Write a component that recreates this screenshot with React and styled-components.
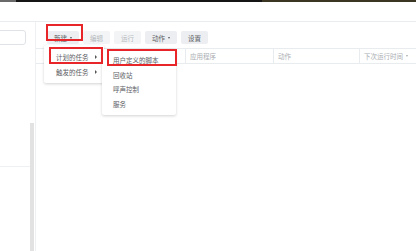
import React from "react";
import styled, { createGlobalStyle } from "styled-components";

const GlobalStyle = createGlobalStyle`
  html, body {
    margin: 0;
    padding: 0;
    background: #fff;
  }
  body {
    font-family: "Noto Sans CJK SC", "Noto Sans", sans-serif;
    font-size: 6.5px;
    color: #555;
    overflow: hidden;
  }
`;

const Page = styled.div`
  width: 416px;
  height: 251px;
  display: flex;
  flex-direction: column;
  overflow: hidden;
`;

const TopStrip = styled.div`
  height: 2px;
  display: flex;
  span:nth-child(1) { width: 16px; background: #6a6a6a; }
  span:nth-child(2) { width: 246px; background: #151515; }
  span:nth-child(3) { flex: 1; background: #3b3624; }
`;

const TitleGap = styled.div`
  height: 19px;
  border-bottom: 1px solid #e9edf0;
`;

const Body = styled.div`
  flex: 1;
  display: flex;
  min-height: 0;
`;

const Side = styled.div`
  width: 35px;
  border-right: 1px solid #eef1f3;
  display: flex;
  flex-direction: column;
`;

const Search = styled.div`
  margin: 8px 9px 0 -4px;
  height: 13px;
  border: 1px solid #dfe3e7;
  border-radius: 3px;
`;

const SideList = styled.div`
  flex: 1;
  display: flex;
  margin-top: 78px;
  padding-right: 1px;
`;

const SideRows = styled.div`
  flex: 1;
  padding-top: 43px;
  div {
    border-top: 1px solid #edf1f4;
  }
`;

const Scrollbar = styled.div`
  width: 4px;
  background: #e2e2e2;
`;

const Main = styled.div`
  flex: 1;
  position: relative;
  display: flex;
  flex-direction: column;
`;

const Toolbar = styled.div`
  display: flex;
  gap: 4px;
  padding: 9px 0 0 11px;
`;

const Button = styled.div`
  height: 13px;
  padding: 0 7px;
  display: flex;
  align-items: center;
  gap: 3px;
  border-radius: 2px;
  background: ${(p) => (p.$disabled ? "#f3f4f6" : "#eceef1")};
  color: ${(p) => (p.$disabled ? "#b4b8bc" : "#5a5d61")};
  white-space: nowrap;
`;

const Caret = styled.i`
  display: inline-block;
  width: 0;
  height: 0;
  border-left: 1.5px solid transparent;
  border-right: 1.5px solid transparent;
  border-top: 2px solid currentColor;
`;

const Header = styled.div`
  margin-top: 4px;
  height: 14px;
  display: flex;
  border-top: 1px solid #e8ecef;
  border-bottom: 1px solid #e8ecef;
  padding-left: 9px;
  color: #a9adb1;
`;

const Col = styled.div`
  width: ${(p) => p.$w || "auto"};
  flex: ${(p) => (p.$w ? "none" : 1)};
  display: flex;
  align-items: center;
  gap: 3px;
  padding-left: 4px;
  border-left: ${(p) => (p.$first ? "none" : "1px solid #e8ecef")};
  white-space: nowrap;
`;

const Menu = styled.div`
  position: absolute;
  left: ${(p) => p.$left}px;
  top: ${(p) => p.$top}px;
  width: ${(p) => p.$width}px;
  padding: 4px 0;
  background: #fff;
  box-shadow: 0 1px 3px rgba(0, 0, 0, 0.18);
  border-radius: 2px;
  z-index: ${(p) => p.$z};
`;

const MenuItem = styled.div`
  height: ${(p) => p.$h}px;
  display: flex;
  align-items: center;
  justify-content: space-between;
  padding: 0 7px 0 ${(p) => p.$pad}px;
  color: #5c6064;
  white-space: nowrap;
`;

const Arrow = styled.i`
  width: 0;
  height: 0;
  border-top: 2px solid transparent;
  border-bottom: 2px solid transparent;
  border-left: 2.5px solid #555;
`;

const Mark = styled.div`
  position: absolute;
  left: ${(p) => p.$left}px;
  top: ${(p) => p.$top}px;
  width: ${(p) => p.$w}px;
  height: ${(p) => p.$h}px;
  border: 2px solid #e8262a;
  box-sizing: border-box;
  z-index: 10;
  pointer-events: none;
`;

export default function App() {
  return (
    <Page>
      <GlobalStyle />
      <TopStrip>
        <span />
        <span />
        <span />
      </TopStrip>
      <TitleGap />
      <Body>
        <Side>
          <Search />
          <SideList>
            <SideRows>
              <div />
            </SideRows>
            <Scrollbar />
          </SideList>
        </Side>
        <Main>
          <Toolbar>
            <Button>
              新建 <Caret />
            </Button>
            <Button $disabled>编辑</Button>
            <Button $disabled>运行</Button>
            <Button>
              动作 <Caret />
            </Button>
            <Button>设置</Button>
          </Toolbar>
          <Header>
            <Col $first $w="136px" />
            <Col $w="83px">应用程序</Col>
            <Col $w="81px">动作</Col>
            <Col>
              下次运行时间 <Caret />
            </Col>
          </Header>

          <Menu $left={8} $top={23} $width={60} $z={3}>
            <MenuItem $h={15} $pad={12}>
              计划的任务 <Arrow />
            </MenuItem>
            <MenuItem $h={15} $pad={12}>
              触发的任务 <Arrow />
            </MenuItem>
          </Menu>
          <Menu $left={66} $top={27} $width={74} $z={4}>
            <MenuItem $h={14.5} $pad={11}>用户定义的脚本</MenuItem>
            <MenuItem $h={14.5} $pad={11}>回收站</MenuItem>
            <MenuItem $h={14.5} $pad={11}>呼声控制</MenuItem>
            <MenuItem $h={14.5} $pad={11}>服务</MenuItem>
          </Menu>

          <Mark $left={10} $top={2} $w={37} $h={17} />
          <Mark $left={13} $top={25} $w={54} $h={17} />
          <Mark $left={71} $top={27} $w={70} $h={17} />
        </Main>
      </Body>
    </Page>
  );
}
